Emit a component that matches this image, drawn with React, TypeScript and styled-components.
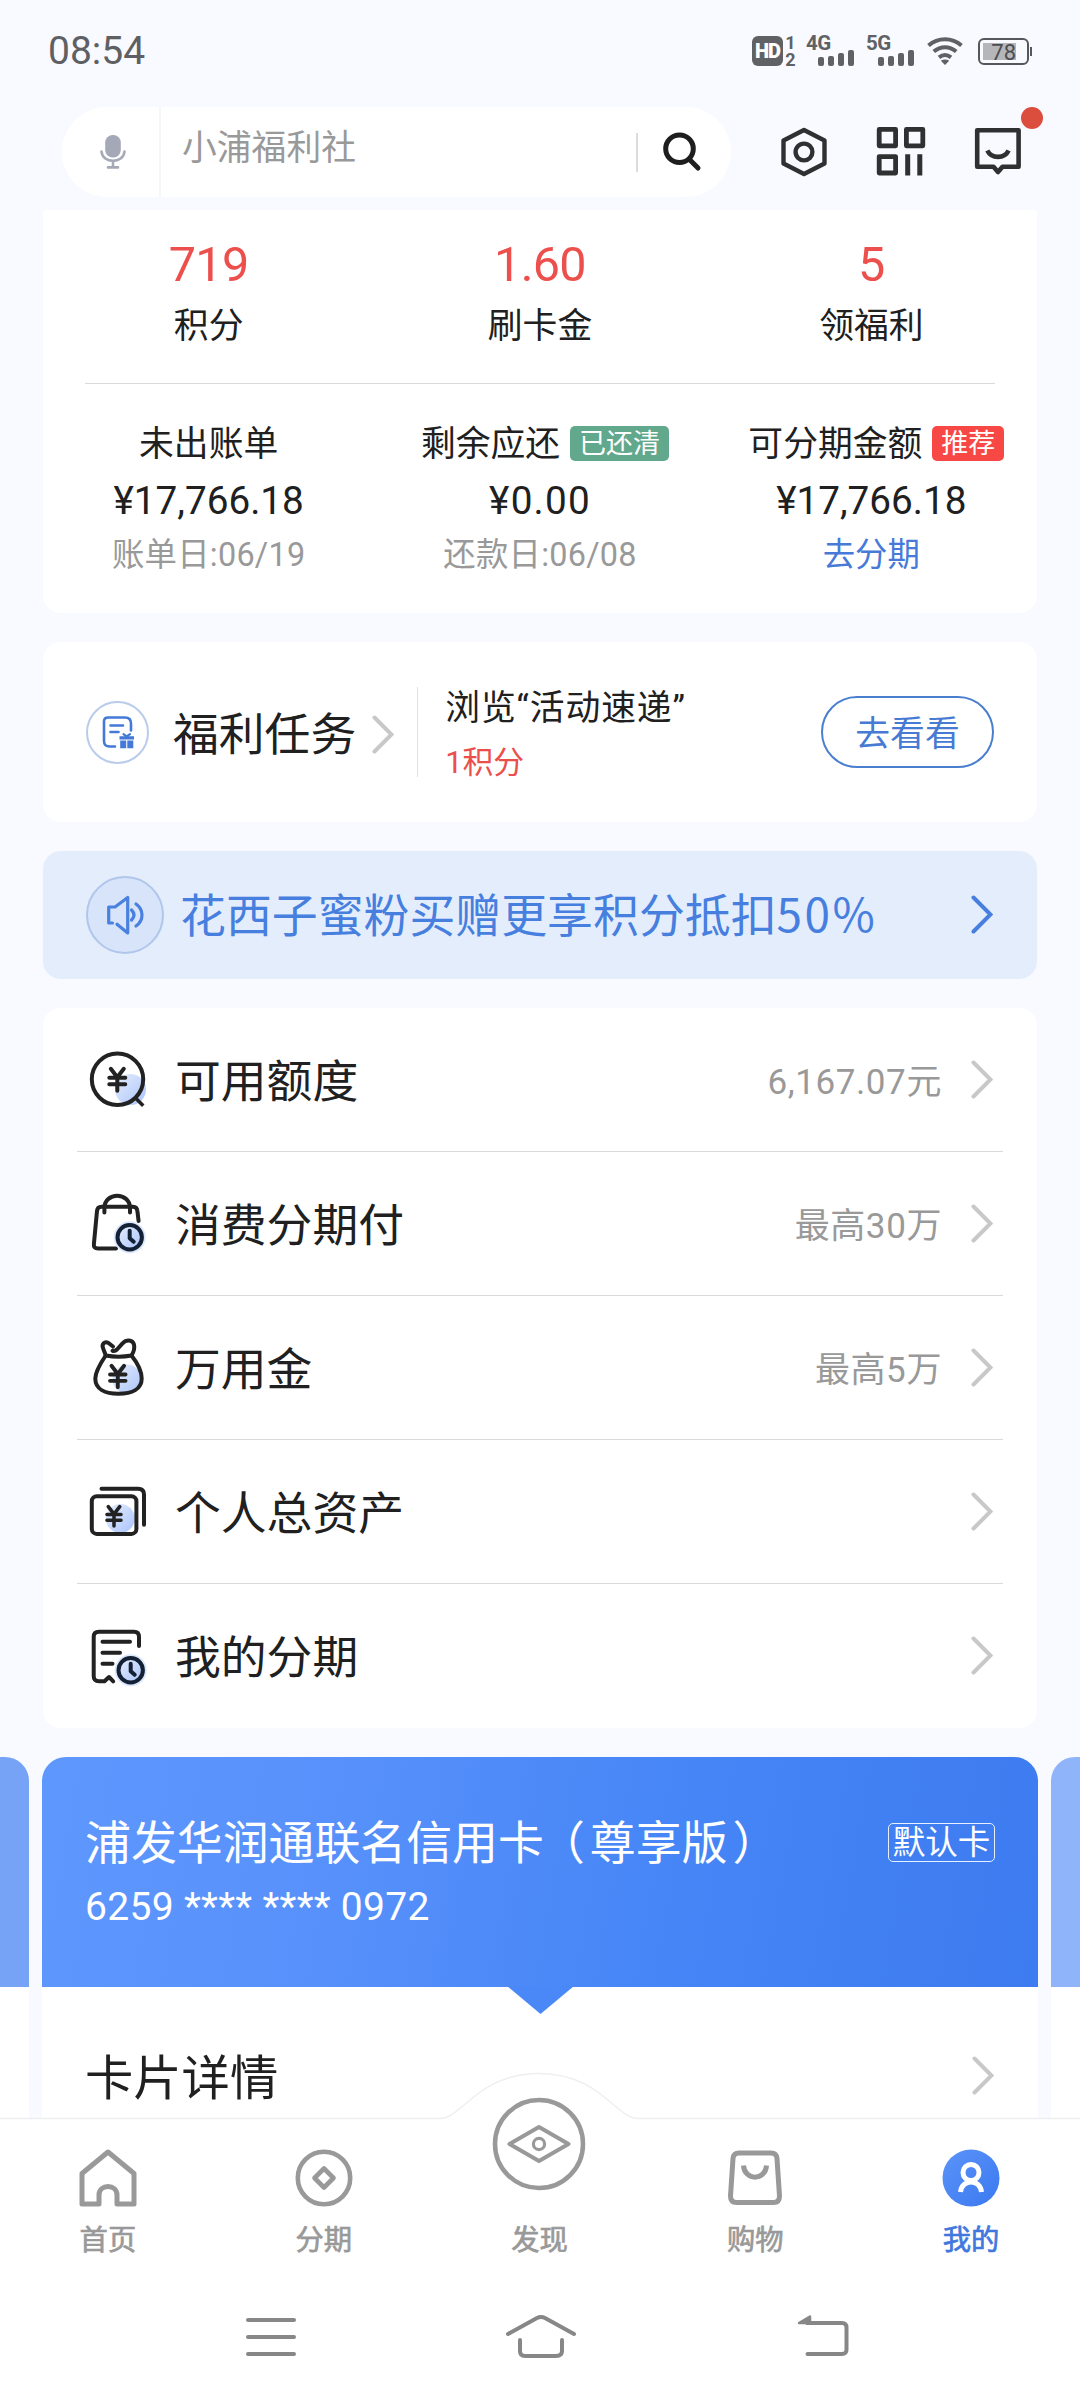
import React from "react";
import styled, { createGlobalStyle } from "styled-components";

const GlobalStyle = createGlobalStyle`
  * { box-sizing: border-box; }
  body {
    margin: 0;
    background: #f8faff;
    font-family: Roboto, "Noto Sans CJK SC", sans-serif;
    color: #202020;
  }
  svg { display: block; flex: none; }
`;

const Screen = styled.div`
  width: 1080px;
  height: 2400px;
  overflow: hidden;
  display: flex;
  flex-direction: column;
  background: #f8faff;
`;

/* ---------- status bar ---------- */
const StatusBar = styled.div`
  height: 107px;
  padding: 0 48px 5px;
  display: flex;
  align-items: center;
  justify-content: space-between;
`;
const Clock = styled.span`
  font-size: 39px;
  line-height: 44px;
  color: #5f6063;
`;
const StatusIcons = styled.div`
  display: flex;
  align-items: center;
`;
const HdBadge = styled.span`
  width: 31px;
  height: 30px;
  border-radius: 6px;
  background: #606164;
  color: #fff;
  font-size: 20px;
  font-weight: 900;
  line-height: 31px;
  text-align: center;
  letter-spacing: -1px;
`;
const SimNumbers = styled.span`
  width: 13px;
  margin-left: 1px;
  height: 32px;
  display: flex;
  flex-direction: column;
  justify-content: space-between;
  align-items: center;
  font-size: 18px;
  font-weight: 700;
  line-height: 15px;
  color: #606164;
`;
const Signal = styled.div<{ $gap: number }>`
  display: flex;
  flex-direction: column;
  width: 48px;
  height: 30px;
  margin-left: ${(p) => p.$gap}px;
`;
const Network = styled.span`
  font-size: 20.5px;
  font-weight: 700;
  line-height: 15px;
  height: 14px;
  letter-spacing: -0.5px;
  color: #606164;
`;
const Bars = styled.div`
  display: flex;
  gap: 4px;
  height: 16px;
  align-items: flex-end;
  align-self: flex-end;
`;
const Bar = styled.i<{ $h: number }>`
  width: 6px;
  height: ${(p) => p.$h}px;
  border-radius: 2px;
  background: #606164;
`;
const WifiIcon = styled.svg`
  margin-left: 13px;
`;
const Battery = styled.div`
  width: 51px;
  height: 27px;
  margin-left: 15px;
  border: 2px solid #56575a;
  border-radius: 6px;
  padding: 3px;
  display: flex;
`;
const BatteryFill = styled.div`
  width: 33px;
  height: 17px;
  background: #b5b6b9;
  color: #4c4d50;
  font-size: 22px;
  line-height: 19px;
  text-align: right;
`;
const BatteryTip = styled.i`
  width: 2px;
  height: 9px;
  margin: 0 0 0 1px;
  background: #56575a;
`;

/* ---------- header ---------- */
const Header = styled.header`
  height: 103px;
  padding: 0 48px 0 62px;
  display: flex;
  align-items: flex-start;
`;
const SearchBox = styled.div`
  width: 669px;
  height: 90px;
  border-radius: 45px;
  background: #fff;
  display: flex;
  align-items: center;
`;
const MicCell = styled.div`
  width: 99px;
  height: 90px;
  border-right: 2px solid #f4f6f9;
  padding: 28px 0 0 38px;
`;
const SearchText = styled.span`
  flex: 1;
  padding: 0 0 8px 21px;
  font-size: 34.8px;
  line-height: 46px;
  color: #999;
`;
const SearchRule = styled.i`
  width: 2px;
  height: 39px;
  background: #dcdcdc;
`;
const SearchButton = styled.div`
  width: 93px;
  padding-left: 24px;
`;
const HeaderIcons = styled.div`
  display: flex;
  padding: 19px 0 0 48px;
  gap: 45px;
`;
const IconSlot = styled.div`
  position: relative;
  width: 52px;
  height: 52px;
`;
const RedDot = styled.i`
  position: absolute;
  top: -19px;
  left: 48px;
  width: 22px;
  height: 22px;
  border-radius: 50%;
  background: #db4d3d;
`;

/* ---------- scrolling content ---------- */
const Content = styled.main`
  height: 1908px;
  overflow: hidden;
  display: flex;
  flex-direction: column;
`;
const Card = styled.section<{ $h: number; $mt?: number; $bg?: string; $r?: string }>`
  flex: none;
  height: ${(p) => p.$h}px;
  margin: ${(p) => p.$mt ?? 0}px 43px 0;
  border-radius: ${(p) => p.$r ?? "18px"};
  background: ${(p) => p.$bg ?? "#fff"};
`;
const Columns = styled.div`
  display: grid;
  grid-template-columns: repeat(3, 1fr);
  justify-items: center;
`;
const Stat = styled.div`
  display: flex;
  flex-direction: column;
  align-items: center;
  padding-top: 28px;
`;
const StatNumber = styled.span`
  font-size: 48.5px;
  line-height: 54px;
  letter-spacing: -0.7px;
  color: #ec4f4c;
`;
const StatLabel = styled.span`
  margin-top: 11px;
  font-size: 34.8px;
  line-height: 46px;
`;
const Divider = styled.hr<{ $inset: number }>`
  margin: 34px ${(p) => p.$inset}px 0;
  border: 0;
  height: 1px;
  background: #d9dadb;
`;
const Bill = styled.div`
  display: flex;
  flex-direction: column;
  align-items: center;
`;
const BillHead = styled.div<{ $tagged: boolean }>`
  display: flex;
  align-items: center;
  gap: 10px;
  height: 46px;
  margin-top: 37px;
  padding-left: ${(p) => (p.$tagged ? 10 : 0)}px;
  font-size: 34.8px;
  line-height: 46px;
  white-space: nowrap;
`;
const Tag = styled.span<{ $bg: string }>`
  height: 35px;
  margin-top: -2px;
  padding: 0 9px;
  border-radius: 5px;
  background: ${(p) => p.$bg};
  color: #fff;
  font-size: 27px;
  line-height: 36px;
`;
const Amount = styled.span<{ $wide?: boolean }>`
  margin-top: 12px;
  font-size: 38.7px;
  line-height: 44px;
  letter-spacing: ${(p) => (p.$wide ? 1.2 : 0)}px;
`;
const Note = styled.span<{ $link?: boolean }>`
  margin-top: 10px;
  font-size: 32.4px;
  line-height: 44px;
  letter-spacing: ${(p) => (p.$link ? 0 : 0.25)}px;
  color: ${(p) => (p.$link ? "#477ad8" : "#999")};
`;

const TaskRow = styled.div`
  height: 180px;
  padding: 0 43px;
  display: flex;
  align-items: center;
`;
const RoundIcon = styled.div<{ $size: number; $bg: string; $border: string }>`
  flex: none;
  width: ${(p) => p.$size}px;
  height: ${(p) => p.$size}px;
  border-radius: 50%;
  border: 2px solid ${(p) => p.$border};
  background: ${(p) => p.$bg};
  display: flex;
  align-items: center;
  justify-content: center;
`;
const TaskTitle = styled.span`
  margin: 0 16px 0 24px;
  padding-top: 7px;
  font-size: 45.8px;
  line-height: 60px;
`;
const TaskArrow = styled.div`
  padding-top: 5px;
`;
const TaskInfo = styled.div`
  height: 90px;
  margin-left: 23px;
  padding-left: 27px;
  border-left: 1px solid #e1e2e4;
  flex: 1;
  display: flex;
  flex-direction: column;
`;
const TaskName = styled.span`
  margin-top: -2px;
  font-size: 34.8px;
  line-height: 46px;
  letter-spacing: 0.9px;
`;
const TaskReward = styled.span`
  margin-top: 11px;
  font-size: 30.8px;
  line-height: 42px;
  color: #ea4f4b;
`;
const PillButton = styled.button`
  width: 173px;
  height: 72px;
  border: 2px solid #4a7ecf;
  border-radius: 36px;
  background: #fff;
  color: #477ad2;
  font: 34.8px/46px Roboto, "Noto Sans CJK SC", sans-serif;
  padding: 3px 0 0;
`;

const BannerRow = styled.div`
  height: 128px;
  padding: 0 44px 0 43px;
  display: flex;
  align-items: center;
`;
const BannerText = styled.span`
  flex: 1;
  margin-left: 16px;
  padding-bottom: 2px;
  font-size: 45.9px;
  line-height: 60px;
  color: #477fdf;
  white-space: nowrap;
`;
const Percent = styled.span`
  font-family: "Noto Sans CJK SC", sans-serif;
  letter-spacing: 2.5px;
`;

const ListRow = styled.div<{ $last: boolean }>`
  height: 144px;
  margin: 0 34px;
  padding: 1px 10px 0 9px;
  border-bottom: 1px solid ${(p) => (p.$last ? "transparent" : "#d9dadb")};
  display: flex;
  align-items: center;
`;
const RowLabel = styled.span`
  flex: 1;
  margin: 5px 0 0 25px;
  font-size: 45.8px;
  line-height: 60px;
`;
const RowValue = styled.span`
  margin: 5px 29px 0 0;
  font-size: 35px;
  line-height: 46px;
  letter-spacing: 0.6px;
  color: #999;
`;

/* ---------- bank card carousel ---------- */
const Carousel = styled.section`
  flex: none;
  margin-top: 29px;
  display: grid;
  grid-template-columns: 29px 996px 29px;
  column-gap: 13px;
`;
const SideCard = styled.div<{ $side: "left" | "right" }>`
  height: 400px;
  border-radius: ${(p) => (p.$side === "left" ? "0 24px 0 0" : "24px 0 0 0")};
  background: ${(p) =>
    p.$side === "left"
      ? "linear-gradient(#77a3f6 230px, #fff 230px)"
      : "linear-gradient(#8fb4fa 230px, #fff 230px)"};
`;
const BankCard = styled.div`
  height: 400px;
  border-radius: 24px 24px 0 0;
  background: #fff;
`;
const BankFace = styled.div`
  position: relative;
  height: 230px;
  padding: 56px 43px 0 43px;
  border-radius: 24px 24px 0 0;
  background: linear-gradient(100deg, #5e97fd 0%, #5891fb 28%, #4585f6 65%, #3d7bf0 100%);
  color: #fff;
`;
const Pointer = styled.i`
  position: absolute;
  top: 229px;
  left: 465px;
  width: 67px;
  height: 28px;
  background: #4a88f7;
  clip-path: polygon(0 0, 100% 0, 50% 100%);
`;
const BankTitleRow = styled.div`
  display: flex;
  align-items: center;
  justify-content: space-between;
  height: 60px;
`;
const BankTitle = styled.span`
  font-size: 45.9px;
  line-height: 60px;
  white-space: nowrap;
`;
const Paren = styled.span<{ $side: "open" | "close" }>`
  font-feature-settings: "halt";
  padding: ${(p) => (p.$side === "open" ? "0 5px 0 18px" : "0 18px 0 5px")};
`;
const DefaultTag = styled.span`
  width: 107px;
  height: 39px;
  margin-top: -2px;
  border: 1.5px solid #e7f0ff;
  border-radius: 5px;
  font-size: 32.5px;
  line-height: 39px;
  text-align: center;
`;
const BankNumber = styled.div`
  margin-top: 11px;
  font-size: 39px;
  line-height: 46px;
  letter-spacing: 0.32px;
`;
const DetailRow = styled.div`
  height: 170px;
  padding: 8px 44px 0 43px;
  display: flex;
  align-items: center;
  justify-content: space-between;
  font-size: 48.3px;
  line-height: 64px;
`;
const DetailText = styled.span`
  padding-top: 6px;
`;

/* ---------- bottom tabs ---------- */
const TabBar = styled.nav`
  position: relative;
  flex: none;
  height: 162px;
  background: #fff;
  display: grid;
  grid-template-columns: repeat(5, 215.8px);
  grid-template-rows: 162px;
`;
const Hump = styled.svg`
  position: absolute;
  left: 0;
  top: -47px;
`;
const Tab = styled.div<{ $active?: boolean; $gap?: number }>`
  position: relative;
  display: flex;
  flex-direction: column;
  align-items: center;
  justify-content: flex-end;
  padding-bottom: 20px;
  color: ${(p) => (p.$active ? "#4278de" : "#999")};
  font-size: 28.3px;
  line-height: 38px;
  -webkit-text-stroke: 0.7px currentColor;
  gap: ${(p) => p.$gap ?? 15}px;
`;
const SystemNav = styled.div`
  height: 120px;
  background: #fff;
  display: grid;
  grid-template-columns: 60px 74px 56px;
  column-gap: 203px;
  justify-content: start;
  padding: 30px 0 0 241px;
`;
const BackSlot = styled.div`
  padding-left: 16px;
`;

/* ---------- drawings ---------- */
const INK = "#222";

const Chevron = ({ color = "#c8c8c8", w = 4 }: { color?: string; w?: number }) => (
  <svg width="22" height="40" viewBox="0 0 22 40" fill="none" stroke={color} strokeWidth={w} strokeLinecap="round">
    <path d="M2.5 2.5 L19.5 19.500 L2.5 36.500" />
  </svg>
);

const Yen = ({ x, y, s = 1 }: { x: number; y: number; s?: number }) => (
  <path
    transform={`translate(${x} ${y}) scale(${s})`}
    d="M-6.5 0 L0 8.5 L6.5 0 M0 8.5 V22 M-8 9 H8 M-8 15.5 H8"
  />
);

const ListSvg = ({ children }: { children: React.ReactNode }) => (
  <svg width="64" height="64" viewBox="0 0 64 64" fill="none" stroke={INK} strokeWidth="4" strokeLinecap="round" strokeLinejoin="round">
    <defs>
      <linearGradient id="blob" x1="0" y1="0" x2="1" y2="1">
        <stop offset="0" stopColor="#e6eefe" />
        <stop offset="1" stopColor="#a9c3fa" />
      </linearGradient>
    </defs>
    {children}
  </svg>
);

const ClockMark = ({ x, y }: { x: number; y: number }) => (
  <g transform={`translate(${x} ${y})`}>
    <circle r="16" fill="#dbe7fd" stroke="none" />
    <circle r="12.2" fill="url(#blob)" stroke="#142034" />
    <path d="M0 -6.5 V1 L4 4.5" stroke="#142034" />
  </g>
);

const icons = {
  quota: (
    <ListSvg>
      <circle cx="44.5" cy="41.5" r="15.5" fill="url(#blob)" stroke="none" />
      <circle cx="31.5" cy="31.3" r="25.7" />
      <path d="M50.5 51 L56 56.5" strokeLinecap="square" strokeWidth="3.5" />
      <Yen x={31.3} y={20.8} />
    </ListSvg>
  ),
  shopping: (
    <ListSvg>
      <path d="M18.4 20.5 V16 C18.4 -0.2 44 -0.2 44 16 V20.5" />
      <path d="M30 56.5 H12 Q7.4 56.5 7.9 52 L11 19 Q11.4 14.8 15.5 14.8 H47 Q51 14.8 51.4 19 L52.6 29" />
      <ClockMark x={43.7} y={45.3} />
    </ListSvg>
  ),
  money: (
    <ListSvg>
      <circle cx="41" cy="43" r="14.5" fill="url(#blob)" stroke="none" />
      <path d="M19.7 19.5 C12 31 9.3 37 9.3 42.5 C9.3 53 19 57.8 32.5 57.8 C46 57.8 55.7 53 55.7 42.5 C55.7 37 53 29 45.5 19.5" />
      <path d="M27 10.5 L22.5 7 C18.5 5 15.5 8 17 12 C17.8 14.8 19 16.5 19.7 19.5 C28 21 37 21 45.5 19.5 C48 15.5 48.8 12 48 8.5 C46.5 3 40 3.6 36.5 7.3 L31 13.5 Q29 15.5 26.5 14.8" />
      <Yen x={31.8} y={29.8} s={0.97} />
    </ListSvg>
  ),
  assets: (
    <ListSvg>
      <circle cx="34.3" cy="38.5" r="14.5" fill="url(#blob)" stroke="none" />
      <rect x="5.8" y="16.3" width="44.6" height="37.6" rx="5" />
      <path d="M15.5 8.8 H52 Q58 8.8 58 14.5 V44.8" />
      <Yen x={28} y={26.6} s={0.88} />
    </ListSvg>
  ),
  installment: (
    <ListSvg>
      <path d="M53 22 V13 Q53 7.8 48 7.8 H13 Q7.7 7.8 7.7 13 V52 Q7.7 57.3 13 57.3 H18.5 L23 53 L27.2 57.3" />
      <path d="M16.5 17.8 H44 M16.5 28.7 H34 M16.5 39.8 H26.5" />
      <ClockMark x={44.7} y={46.3} />
    </ListSvg>
  ),
};

const rows: { icon: keyof typeof icons; label: string; value?: string }[] = [
  { icon: "quota", label: "可用额度", value: "6,167.07元" },
  { icon: "shopping", label: "消费分期付", value: "最高30万" },
  { icon: "money", label: "万用金", value: "最高5万" },
  { icon: "assets", label: "个人总资产" },
  { icon: "installment", label: "我的分期" },
];

const SignalBars = () => (
  <Bars>
    {[9, 10.5, 13, 16].map((h) => (
      <Bar key={h} $h={h} />
    ))}
  </Bars>
);

export default function App() {
  return (
    <Screen>
      <GlobalStyle />
      <StatusBar>
        <Clock>08:54</Clock>
        <StatusIcons>
          <HdBadge>HD</HdBadge>
          <SimNumbers>
            <span>1</span>
            <span>2</span>
          </SimNumbers>
          <Signal $gap={9}>
            <Network>4G</Network>
            <SignalBars />
          </Signal>
          <Signal $gap={12}>
            <Network>5G</Network>
            <SignalBars />
          </Signal>
          <WifiIcon width="36" height="28" viewBox="0 0 36 28" fill="none" stroke="#606164" strokeWidth="4">
            <path d="M1.5 8.5 C11 0.2 25 0.2 34.5 8.5" />
            <path d="M6.8 14.6 C13.5 8.8 22.5 8.8 29.2 14.6" />
            <path d="M12 20.4 C15.8 17.3 20.2 17.3 24 20.4" />
            <path d="M18 28 L13.8 23.8 Q18 21.2 22.2 23.8 Z" fill="#606164" stroke="none" />
          </WifiIcon>
          <Battery>
            <BatteryFill>78</BatteryFill>
          </Battery>
          <BatteryTip />
        </StatusIcons>
      </StatusBar>

      <Header>
        <SearchBox>
          <MicCell>
            <svg width="26" height="34" viewBox="0 0 26 34" fill="none" stroke="#a5a9b7" strokeWidth="2.6" strokeLinecap="round">
              <rect x="5.2" y="0" width="15.6" height="22.5" rx="7.5" fill="#a5a9b7" stroke="none" />
              <path d="M1.5 16.5 C2.5 29 23.5 29 24.5 16.5 M13 26 V32 M8 32.4 H18" />
            </svg>
          </MicCell>
          <SearchText>小浦福利社</SearchText>
          <SearchRule />
          <SearchButton>
            <svg width="40" height="40" viewBox="0 0 40 40" fill="none" stroke="#1e1e1e" strokeWidth="5" strokeLinecap="round">
              <circle cx="17.5" cy="16.7" r="13.8" />
              <path d="M28 28 L36 36" />
            </svg>
          </SearchButton>
        </SearchBox>
        <HeaderIcons>
          <IconSlot>
            <svg width="52" height="52" viewBox="0 0 52 52" fill="none" stroke="#2f3032" strokeWidth="4.4" strokeLinejoin="round">
              <path d="M25 4 L45.5 14.5 V37.5 L25 48 L4.5 37.5 V14.5 Z" />
              <circle cx="25" cy="26" r="8.4" />
            </svg>
          </IconSlot>
          <IconSlot>
            <svg width="52" height="52" viewBox="0 0 52 52" fill="none" stroke="#2f3032" strokeWidth="4.8" strokeLinejoin="round">
              <path d="M3.2 3.4 H19.6 V19.8 H3.2 Z M30.4 3.4 H46.8 V19.8 H30.4 Z M3.2 30.6 H19.6 V47 H3.2 Z" />
              <path d="M31.7 28.2 V49.4 M43.8 28.2 V49.4" strokeWidth="5" />
            </svg>
          </IconSlot>
          <IconSlot>
            <svg width="52" height="52" viewBox="0 0 52 52" fill="none" stroke="#2f3032" strokeWidth="4.6" strokeLinejoin="round">
              <path d="M4.2 4.3 H45.6 V40.7 H29.5 L25 46 L20.5 40.7 H4.2 Z" />
              <path d="M14.3 24.5 C18.5 33 31.5 33 35.6 24.5" />
            </svg>
            <RedDot />
          </IconSlot>
        </HeaderIcons>
      </Header>

      <Content>
        <Card $h={403} $r="4px 4px 18px 18px">
          <Columns>
            <Stat>
              <StatNumber>719</StatNumber>
              <StatLabel>积分</StatLabel>
            </Stat>
            <Stat>
              <StatNumber>1.60</StatNumber>
              <StatLabel>刷卡金</StatLabel>
            </Stat>
            <Stat>
              <StatNumber>5</StatNumber>
              <StatLabel>领福利</StatLabel>
            </Stat>
          </Columns>
          <Divider $inset={42} />
          <Columns>
            <Bill>
              <BillHead $tagged={false}>未出账单</BillHead>
              <Amount>¥17,766.18</Amount>
              <Note>账单日:06/19</Note>
            </Bill>
            <Bill>
              <BillHead $tagged>
                剩余应还<Tag $bg="#62a88c">已还清</Tag>
              </BillHead>
              <Amount $wide>¥0.00</Amount>
              <Note>还款日:06/08</Note>
            </Bill>
            <Bill>
              <BillHead $tagged>
                可分期金额<Tag $bg="#f74846">推荐</Tag>
              </BillHead>
              <Amount>¥17,766.18</Amount>
              <Note $link>去分期</Note>
            </Bill>
          </Columns>
        </Card>

        <Card $h={180} $mt={29}>
          <TaskRow>
            <RoundIcon $size={63} $bg="#fff" $border="#b9cceb">
              <svg width="36" height="36" viewBox="0 0 36 36" fill="none" stroke="#4479d8" strokeWidth="2.6" strokeLinecap="round">
                <path d="M15 32.500 H9.500 Q4 32.500 4 27 V7.500 Q4 3.500 8 3.500 H25 Q31 3.500 31 9.500 V16.500" />
                <path d="M10.500 11.500 H23 M10.500 18 H18.500" />
                <path d="M19.500 22.300 H34 V25.600 H19.500 Z M20.200 26.600 H26.200 V34.300 H20.200 Z M27.300 26.600 H33.300 V34.300 H27.300 Z" fill="#4479d8" stroke="none" />
                <path d="M26.700 22.500 L23.500 20.200 M26.700 22.500 L30 20.200" strokeWidth="2.200" />
              </svg>
            </RoundIcon>
            <TaskTitle>福利任务</TaskTitle>
            <TaskArrow>
              <Chevron />
            </TaskArrow>
            <TaskInfo>
              <TaskName>浏览“活动速递”</TaskName>
              <TaskReward>1积分</TaskReward>
            </TaskInfo>
            <PillButton>去看看</PillButton>
          </TaskRow>
        </Card>

        <Card $h={128} $mt={29} $bg="#e4edfc">
          <BannerRow>
            <RoundIcon $size={78} $bg="#d8e4fa" $border="#b0c6ea">
              <svg width="40" height="40" viewBox="0 0 40 40" fill="none" stroke="#4a80de" strokeWidth="3.2" strokeLinecap="round" strokeLinejoin="round">
                <path d="M7.500 28 H3.700 V12 H10 L22.700 2.500 V38 L12 29.200" />
                <path d="M26.500 15 Q31.500 20 26.500 25 M31 9 C39 14.500 39 25.500 31 31" />
              </svg>
            </RoundIcon>
            <BannerText>
              花西子蜜粉买赠更享积分抵扣<Percent>50%</Percent>
            </BannerText>
            <Chevron color="#477fdf" />
          </BannerRow>
        </Card>

        <Card $h={720} $mt={29}>
          {rows.map((row, i) => (
            <ListRow key={row.label} $last={i === rows.length - 1}>
              {icons[row.icon]}
              <RowLabel>{row.label}</RowLabel>
              {row.value && <RowValue>{row.value}</RowValue>}
              <Chevron />
            </ListRow>
          ))}
        </Card>

        <Carousel>
          <SideCard $side="left" />
          <BankCard>
            <BankFace>
              <BankTitleRow>
                <BankTitle>
                  浦发华润通联名信用卡<Paren $side="open">（</Paren>尊享版<Paren $side="close">）</Paren>
                </BankTitle>
                <DefaultTag>默认卡</DefaultTag>
              </BankTitleRow>
              <BankNumber>6259 **** **** 0972</BankNumber>
              <Pointer />
            </BankFace>
            <DetailRow>
              <DetailText>卡片详情</DetailText>
              <Chevron />
            </DetailRow>
          </BankCard>
          <SideCard $side="right" />
        </Carousel>
      </Content>

      <TabBar>
        <Hump width="1080" height="50" viewBox="0 0 1080 50">
          <path
            d="M0 47.5 H440 C462 47.5 478 2.500 539 2.500 C600 2.500 616 47.5 638 47.5 H1080 V50 H0 Z"
            fill="#fff"
          />
          <path
            d="M0 47.5 H440 C462 47.5 478 2.500 539 2.500 C600 2.500 616 47.5 638 47.5 H1080"
            fill="none"
            stroke="#eeeff1"
            strokeWidth="1.5"
          />
        </Hump>
        <Tab>
          <svg width="58" height="58" viewBox="0 0 58 58" fill="none" stroke="#999" strokeWidth="5" strokeLinejoin="round">
            <path d="M3 24.5 L29 3 L55 24.5 V55 H38 V46 C38 34.5 20 34.5 20 46 V55 H3 Z" />
          </svg>
          首页
        </Tab>
        <Tab>
          <svg width="58" height="58" viewBox="0 0 58 58" fill="none" stroke="#999" strokeWidth="4.6" strokeLinejoin="round">
            <circle cx="29" cy="29" r="26.2" />
            <path d="M29 19.5 L38.5 29 L29 38.5 L19.5 29 Z" />
          </svg>
          分期
        </Tab>
        <Tab $gap={31}>
          <svg width="94" height="94" viewBox="0 0 94 94" fill="none" stroke="#999" strokeWidth="4.5" strokeLinejoin="round">
            <circle cx="47" cy="47" r="44" />
            <path d="M17.5 47 L47 30 L76.5 47 L47 64 Z" strokeWidth="4" />
            <circle cx="47" cy="47" r="5.6" strokeWidth="3.2" />
          </svg>
          发现
        </Tab>
        <Tab>
          <svg width="58" height="58" viewBox="0 0 58 58" fill="none" stroke="#999" strokeWidth="5" strokeLinejoin="round">
            <path d="M13 4 H45 Q50.5 4 51 9.5 L53.5 47 Q53.5 53.5 47.5 53.5 H10.5 Q4.500 53.5 4.500 47 L7 9.500 Q7.500 4 13 4 Z" />
            <path d="M17.500 16.500 C18.500 32 39.500 32 40.500 16.500" />
          </svg>
          购物
        </Tab>
        <Tab $active>
          <svg width="58" height="58" viewBox="0 0 58 58" fill="none" stroke="#fff" strokeWidth="5">
            <defs>
              <linearGradient id="me" x1="0" y1="0" x2="1" y2="1">
                <stop offset="0" stopColor="#5b93f8" />
                <stop offset="1" stopColor="#3b79f0" />
              </linearGradient>
            </defs>
            <circle cx="29" cy="29" r="28.500" fill="url(#me)" stroke="none" />
            <circle cx="29" cy="23.500" r="8" />
            <path d="M18.500 43 C20 29.500 38 29.500 39.500 43" />
          </svg>
          我的
        </Tab>
      </TabBar>

      <SystemNav>
        <svg width="60" height="50" viewBox="0 0 60 50" fill="none" stroke="#878787" strokeWidth="4" strokeLinecap="round">
          <path d="M7 10 H53 M7 27 H53 M7 44 H53" />
        </svg>
        <svg width="74" height="50" viewBox="0 0 74 50" fill="none" stroke="#878787" strokeWidth="4" strokeLinecap="round" strokeLinejoin="round">
          <path d="M4 24 L33 8 Q37 6 41 8 L70 24" />
          <path d="M16 30 V41 Q16 46 21 46 H52 Q58 46 58 41 V30" />
        </svg>
        <BackSlot>
          <svg width="56" height="50" viewBox="0 0 56 50" fill="none" stroke="#878787" strokeWidth="4" strokeLinecap="round" strokeLinejoin="round">
            <path d="M10 13 H45 Q49.500 13 49.500 17.500 V39.500 Q49.500 44 45 44 H10.500" />
            <path d="M2 13 L13 6.500 V13 Z" fill="#878787" strokeWidth="2.500" />
          </svg>
        </BackSlot>
      </SystemNav>
    </Screen>
  );
}
